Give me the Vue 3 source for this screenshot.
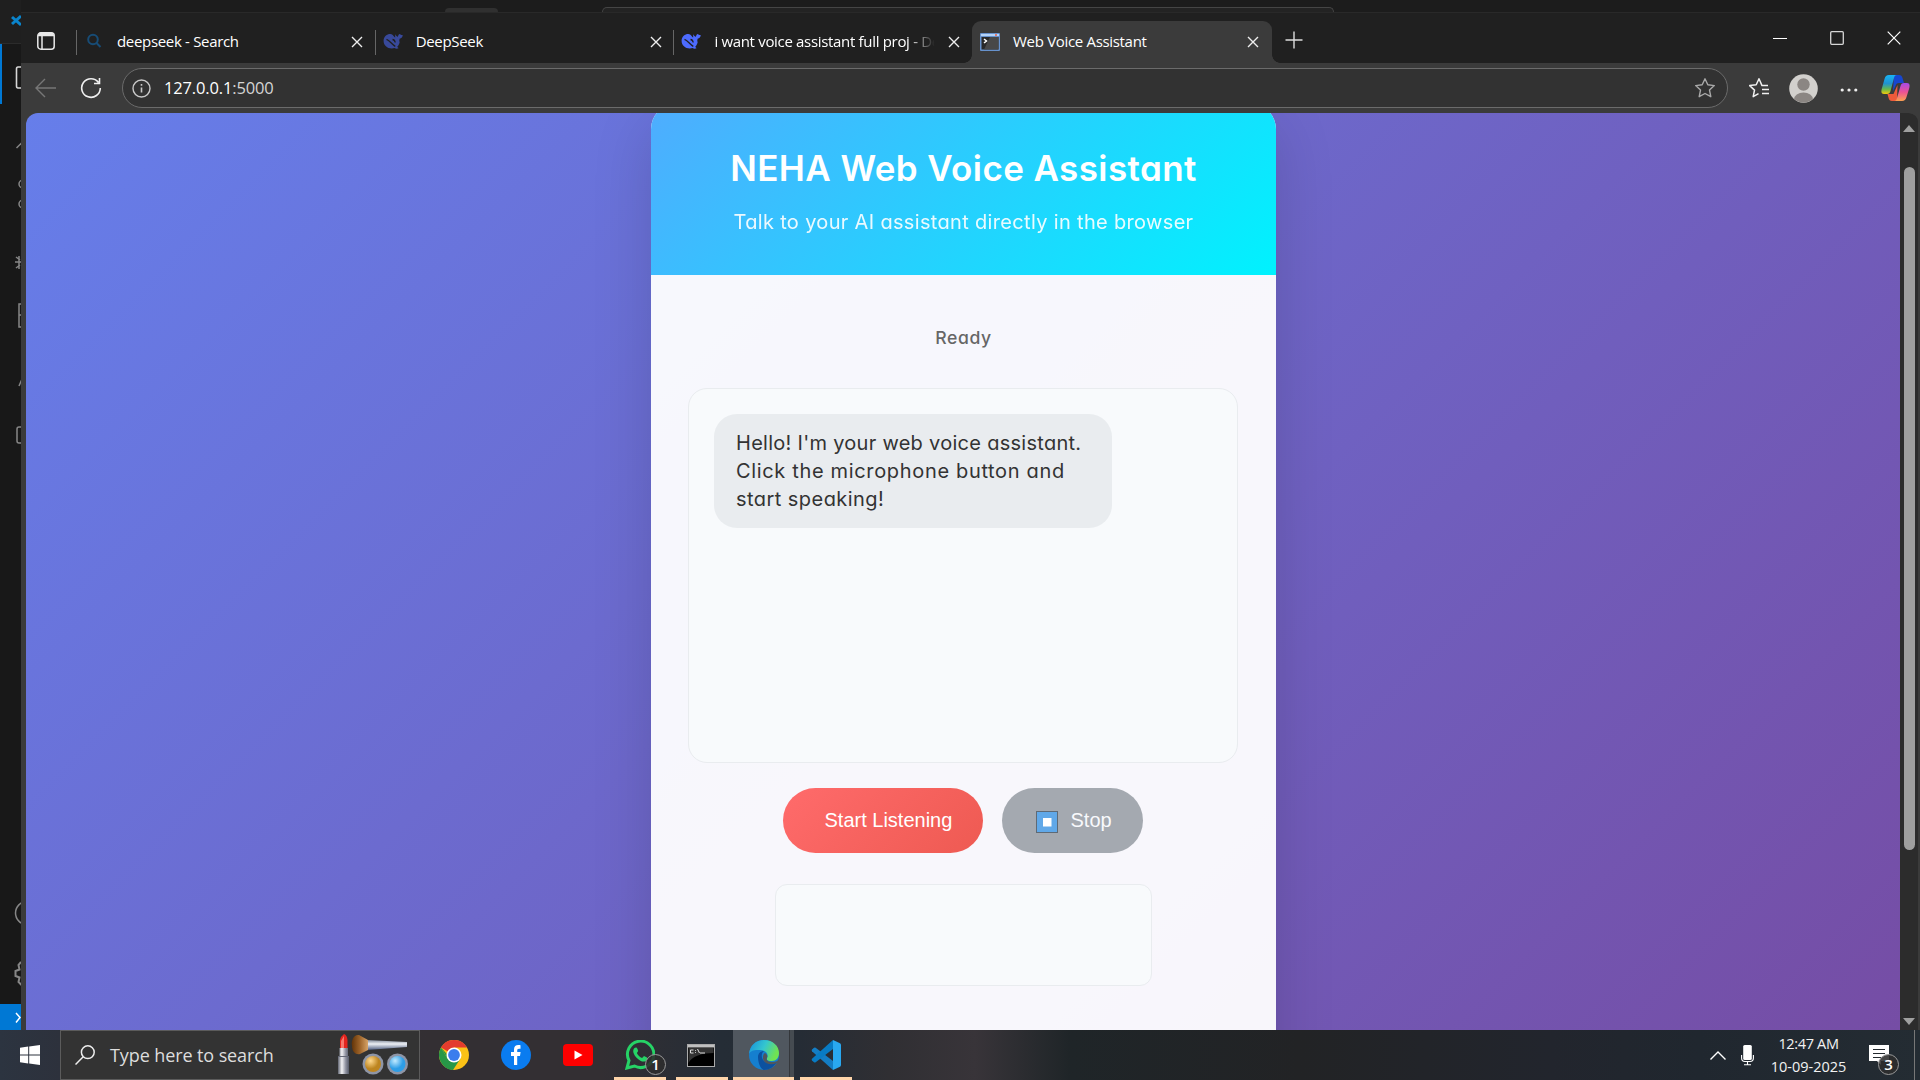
<script setup>
const tabs = [
  { title: 'deepseek - Search', icon: 'search' },
  { title: 'DeepSeek', icon: 'whale', dim: true },
  { title: 'i want voice assistant full proj - De', icon: 'whale', fade: true },
]
const whaleBody = 'M.6 9.800C.6 5.500 4 3 7.200 3c2 0 2.600 1.300 4.200 3 2.200 2 4.800 3.200 5.300 5-.4 2-1.300 3.700-2.600 5 .8.300 1.200.7 1.400 1.300-1.500.6-2.800.4-4-.2C6 18.600.6 15.500.6 9.800z'
const whaleTail = 'M12.300 3.300c.7 1.800 1.500 2.300 2.600 2.500.3-1.600 1-2.400 2-2.700.8 1 1.600 1.100 2.800.8-.1 2-1.200 3.500-3.100 3.800-.2 1.800-.5 3.400-1.200 4.500L12 8.500z'
</script>

<template>
  <div class="screen">
    <div class="desktop">
      <aside class="editor">
        <svg width="21" height="1030" viewBox="0 0 21 1030" fill="none">
          <path d="M0 0H21V43H0z" fill="#1f1f1f" /><path d="M0 43.500H21" stroke="#2b2b2b" />
          <path d="M12 17l9 8M12 24l9-8" stroke="#0a84cc" stroke-width="3" />
          <path d="M0 44H2V104H0z" fill="#0078d4" />
          <path d="M24 67h-6q-1.500 0-1.500 2v17q0 2 1.500 2h6" stroke="#d7d7d7" stroke-width="1.600" />
          <g stroke="#868686" stroke-width="1.500">
            <path d="M16.500 148l5-5" />
            <circle cx="23" cy="184" r="4" /><circle cx="23" cy="204" r="4" />
            <path d="M16 257l4 3M15 262h6M16 268l4-3M19 256v13" />
            <path d="M24 304h-5v23h5M19 315h4" />
            <path d="M19 386l3-7M24 427h-5q-2 0-2 2v12q0 2 2 2h5" />
            <circle cx="27" cy="913" r="11.500" />
            <path d="M21 962l-2.500 3 1 4.500-4 1.500v5l4 1.500-1 4.500 3 3" stroke-width="2" />
          </g>
          <path d="M0 1004H21V1030H0z" fill="#0078d4" /><path d="M16 1013l4 4.500-4 5" stroke="#fff" stroke-width="1.500" />
        </svg>
      </aside>

      <div class="main">
        <div class="behind"><i class="chip"></i><i class="command"></i></div>
        <div class="browser">
          <div class="tabbar">
            <svg class="workspace" width="20" height="20" viewBox="0 0 20 20" fill="none" stroke="#e8e8e8" stroke-width="1.500"><rect x="1.800" y="1.800" width="16.400" height="16.400" rx="3" /><path d="M2 4.500h16M6 5v13" /><path d="M3 3.300h14" stroke-width="3" /></svg>
            <div v-for="t in tabs" :key="t.title" class="tab">
              <svg v-if="t.icon === 'search'" class="fav" width="20" height="20" viewBox="0 0 20 20" fill="none" stroke="#174c76" stroke-width="2"><circle cx="9" cy="8.500" r="4.800" /><path d="M12.500 12l4 4" /></svg>
              <svg v-else class="fav" :class="{ dim: t.dim }" width="20" height="20" viewBox="0 0 20 20"><path :d="whaleBody" fill="#4d6bfe" /><path :d="whaleTail" fill="#4d6bfe" /><path d="M3.500 8.300c3.300 1.200 5.300 5.200 8.800 7M9.500 8.500c1.500.2 2.500 1.500 2.700 3" fill="none" stroke="#202020" stroke-width="1.300" /></svg>
              <span class="title" :class="{ fade: t.fade }">{{ t.title }}</span>
              <svg class="close" width="12" height="12" viewBox="0 0 12 12"><path d="M1 1l10 10M11 1L1 11" stroke="#eee" stroke-width="1.400" /></svg>
            </div>
            <div class="tab active">
              <svg class="fav" width="20" height="18" viewBox="0 0 20 18"><rect width="20" height="18" rx="1" fill="#6792cd" /><path d="M1 1h18v2H1z" fill="#b5d3f7" /><path d="M15 1h2v2h-2z" fill="#df7d72" /><path d="M1.500 4h17v12.500h-17z" fill="#292929" /><path d="M10 4h8.500v12.500H4z" fill="#484848" /><path d="M4 6l2.500 2L4 10" fill="none" stroke="#fff" stroke-width="1.500" /></svg>
              <span class="title">Web Voice Assistant</span>
              <svg class="close" width="12" height="12" viewBox="0 0 12 12"><path d="M1 1l10 10M11 1L1 11" stroke="#eee" stroke-width="1.400" /></svg>
            </div>
            <svg class="plus" width="18" height="18" viewBox="0 0 18 18"><path d="M9 .5v17M.5 9h17" stroke="#ddd" stroke-width="1.400" /></svg>
            <div class="controls">
              <svg width="14" height="14" viewBox="0 0 14 14"><path d="M0 7.500h14" stroke="#fff" /></svg>
              <svg width="14" height="14" viewBox="0 0 14 14"><rect x=".7" y=".7" width="12.600" height="12.600" rx="1" fill="none" stroke="#d6d6d6" stroke-width="1.300" /></svg>
              <svg width="14" height="14" viewBox="0 0 14 14"><path d="M.7.7l12.600 12.600M13.300.7L.7 13.300" stroke="#fff" stroke-width="1.200" /></svg>
            </div>
          </div>

          <div class="toolbar">
            <svg class="back" width="22" height="20" viewBox="0 0 22 20" fill="none" stroke="#777" stroke-width="1.400"><path d="M21 10H1.500M10 1L1 10l9 9" /></svg>
            <svg class="reload" width="22" height="22" viewBox="0 0 22 22" fill="none" stroke="#f0f0f0" stroke-width="1.600"><path d="M18.500 5.500A9.300 9.300 0 1 0 20.300 11M19.500 1v5.500H14" /></svg>
            <div class="address">
              <svg width="19" height="19" viewBox="0 0 19 19" fill="none" stroke="#c9c9c9" stroke-width="1.400"><circle cx="9.500" cy="9.500" r="8.500" /><path d="M9.500 8.500v5M9.500 5v1.700" stroke-width="1.600" /></svg>
              <span>127.0.0.1<em>:5000</em></span>
              <svg class="star" width="22" height="22" viewBox="0 0 22 22" fill="none" stroke="#a9a9a9" stroke-width="1.400" stroke-linejoin="round"><path d="M11 1.800l2.800 6 6.500.8-4.800 4.500 1.300 6.600L11 16.500l-5.800 3.200 1.300-6.600L1.700 8.600l6.500-.8z" /></svg>
            </div>
            <svg class="favs" width="22" height="22" viewBox="0 0 22 22" fill="none" stroke="#f0f0f0" stroke-width="1.500" stroke-linejoin="round"><path d="M20 8.600h-6L11 1.800l-2.800 6-6.500.8 4.800 4.500-1.300 6.600 5.300-3M14 12.500h7M14 16.500h7" /></svg>
            <svg class="avatar" width="29" height="29" viewBox="0 0 29 29"><defs><clipPath id="face"><circle cx="14.500" cy="14.500" r="14" /></clipPath></defs><circle cx="14.500" cy="14.500" r="14.300" fill="#d2d0cd" /><g fill="#8b8683" clip-path="url(#face)"><circle cx="14.500" cy="10.500" r="6.200" /><ellipse cx="14.500" cy="25.500" rx="9.500" ry="7" /></g></svg>
            <svg class="dots" width="18" height="6" viewBox="0 0 18 6" fill="#eee"><circle cx="2.200" cy="3" r="1.600" /><circle cx="9" cy="3" r="1.600" /><circle cx="15.800" cy="3" r="1.600" /></svg>
            <svg class="copilot" width="29" height="28" viewBox="0 0 29 28">
              <defs>
                <linearGradient id="cpa" x1="0" y1="0" x2="0" y2="1"><stop stop-color="#18b4f4" /><stop offset=".45" stop-color="#2092d0" /><stop offset=".75" stop-color="#67b84b" /><stop offset="1" stop-color="#f5c90b" /></linearGradient>
                <linearGradient id="cpb" x1="0" y1="0" x2="0" y2="1"><stop stop-color="#a44bea" /><stop offset=".5" stop-color="#ed5195" /><stop offset="1" stop-color="#fba150" /></linearGradient>
              </defs>
              <path d="M13 1h5c2 0 3 1 3.500 3l1.500 5h-5c-2 0-3 1-3.500 3L12 17z" fill="#1746cf" />
              <path d="M16 27h-5c-2 0-3-1-3.400-3L6.500 20h6l4-9z" fill="#ef5a3b" />
              <path d="M8 1h8c-2 0-2.500 1-3 3l-3.500 13c-.5 2-1.500 3-3.500 3H3c-3 0-3-3-2-6L3.500 5C4.200 2.500 5.500 1 8 1z" fill="url(#cpa)" />
              <path d="M21 27h-8c2 0 2.500-1 3-3l3.500-12c.5-2 1.500-3 3.500-3h3c3 0 3 3 2 6l-2.500 8c-.7 2.500-2 4-4.500 4z" fill="url(#cpb)" />
            </svg>
          </div>

          <div class="viewport">
            <div class="page">
              <main class="card">
                <header><h1>NEHA Web Voice Assistant</h1><p>Talk to your AI assistant directly in the browser</p></header>
                <div class="status">Ready</div>
                <section class="chat">
                  <div class="bubble">
                    <div class="l1">Hello! I'm your web voice assistant.</div>
                    <div class="l2">Click the microphone button and</div>
                    <div class="l3">start speaking!</div>
                  </div>
                </section>
                <div class="actions">
                  <button class="start">Start Listening</button>
                  <button class="stop"><svg width="22" height="22" viewBox="0 0 22 22"><rect x=".5" y=".5" width="21" height="21" fill="#60a8e8" stroke="#5e6a76" /><rect x="7" y="7" width="8.500" height="8.500" fill="#fff" /></svg><span>Stop</span></button>
                </div>
                <div class="transcript"></div>
              </main>
            </div>
            <div class="scroll"><i class="up"></i><i class="thumb"></i><i class="down"></i></div>
          </div>
        </div>
      </div>
    </div>

    <footer class="taskbar">
      <div class="win"><svg width="20" height="20" viewBox="0 0 20 20" fill="#fff"><path d="M0 2.800L8.200 1.600v7.900H0zM9.200 1.500L20 0v9.500H9.200zM0 10.500h8.200v7.900L0 17.200zM9.200 10.500H20V20L9.200 18.500z" /></svg></div>
      <div class="search">
        <svg width="20" height="20" viewBox="0 0 20 20" fill="none" stroke="#eee" stroke-width="1.500"><circle cx="12.800" cy="7.200" r="6.400" /><path d="M8.200 11.800L.5 19.500" /></svg>
        <span>Type here to search</span>
        <svg class="makeup" width="72" height="44" viewBox="0 0 72 44">
          <defs>
            <linearGradient id="metal"><stop stop-color="#5f6370" /><stop offset=".35" stop-color="#f4f4f6" /><stop offset=".7" stop-color="#8f92a0" /><stop offset="1" stop-color="#555a68" /></linearGradient>
            <linearGradient id="handle" x1="0" y1="0" x2="0" y2="1"><stop stop-color="#828b9c" /><stop offset=".4" stop-color="#edf0f4" /><stop offset="1" stop-color="#4d5c80" /></linearGradient>
            <linearGradient id="hair"><stop stop-color="#633408" /><stop offset=".5" stop-color="#9d642a" /><stop offset="1" stop-color="#d6a367" /></linearGradient>
            <radialGradient id="gold" cx=".35" cy=".3"><stop stop-color="#ffd88c" /><stop offset="1" stop-color="#bd8520" /></radialGradient>
            <radialGradient id="sky" cx=".35" cy=".3"><stop stop-color="#c1eaff" /><stop offset="1" stop-color="#2d9de6" /></radialGradient>
          </defs>
          <path d="M3 16V7q1-4 4-6 3 1 3.500 6v9z" fill="#e4251f" /><path d="M4 15V8l3-5v12z" fill="#f8766a" />
          <path d="M2.500 15h8.500v9H2.500zM1 23h11v18H1z" fill="url(#metal)" /><path d="M1 23.500h11" stroke="#656978" />
          <path d="M30 7l40 2v5l-40 3z" fill="url(#handle)" /><path d="M31 7L22 2c-5-1-8 5-7 11 0 6 4 9 8 8l8-4z" fill="url(#hair)" />
          <circle cx="36" cy="31" r="10.500" fill="#8e95a6" /><circle cx="36" cy="31" r="8" fill="url(#gold)" />
          <circle cx="60.500" cy="31" r="10.500" fill="#8e95a6" /><circle cx="60.500" cy="31" r="8" fill="url(#sky)" />
        </svg>
      </div>
      <nav class="apps">
        <div class="app"><svg width="30" height="30" viewBox="0 0 30 30"><circle cx="15" cy="15" r="15" fill="#fbc116" /><path d="M15 15L2 7.500A15 15 0 0 1 28 7.500H15z" fill="#e33b2e" /><path d="M2 7.500A15 15 0 0 0 14 30l7.500-11.500L15 15 8.500 18.700z" fill="#279847" /><path d="M2 7.500l6.500 11.200L15 22z" fill="#279847" /><circle cx="15" cy="15" r="7.500" fill="#fff" /><circle cx="15" cy="15" r="5.900" fill="#3b7ded" /></svg></div>
        <div class="app"><svg width="30" height="30" viewBox="0 0 30 30"><circle cx="15" cy="15" r="15" fill="#0a7cf0" /><path d="M13 25v-9h-3v-4h3v-2.500C13 6.300 14.800 5 17.300 5c1.200 0 2.200.2 2.200.2v3.500H18c-1.400 0-1.800.7-1.800 1.800V12h3.400l-.6 4h-2.800v9z" fill="#fff" /></svg></div>
        <div class="app"><svg width="30" height="22" viewBox="0 0 30 22"><rect width="30" height="22" rx="4" fill="#f00" /><path d="M11.500 6.500l8 4.500-8 4.500z" fill="#fff" /></svg></div>
        <div class="app open wa"><svg width="30" height="30" viewBox="0 0 30 30"><path d="M2 28l2-7.500A13.200 13.200 0 1 1 9.500 26z" fill="none" stroke="#26d366" stroke-width="3" /><path d="M9.500 8c1.500-1.200 2.500-.5 3 1l.7 2-1.300 2c1.100 2.400 2.800 4 5.200 5l1.900-1.900 3 1.400c.7.800.1 3-1.500 3.700-2.500 1.100-5.500-.3-8.700-3.300-3-3-5-7.400-2.300-9.900z" fill="#26d366" /></svg><b class="badge">1</b></div>
        <div class="app open cmd"><svg width="28" height="23" viewBox="0 0 28 23"><rect x=".5" y=".5" width="27" height="22" fill="#000" stroke="#aaa" /><path d="M1 1h26v2.500H1z" fill="#c0c0c0" /><path d="M1.500 4h25v5C15 9 5 12 1.500 19z" fill="#333" /><path d="M6.500 6h-3v3h3M8.500 6v.8M8.500 8.200V9M10.500 5l2 4M13 9h5" fill="none" stroke="#ddd" /></svg></div>
        <div class="app open current"><svg width="30" height="30" viewBox="0 0 30 30"><defs><linearGradient id="eg" x1="0" y1="0" x2="1" y2=".35"><stop stop-color="#168edc" /><stop offset=".55" stop-color="#34c6cf" /><stop offset="1" stop-color="#70e352" /></linearGradient></defs><circle cx="15" cy="15" r="15" fill="#157fcf" /><path d="M0 14C1 5 7 0 15 0c9 0 15 6 15 13 0 5-3 8-7 8-4 0-6-1-5-3 2-4-1-8-7-8C5 9.500 1 11 0 14z" fill="url(#eg)" /><path d="M9 17c0-4 3-6 6-6-3 2-3 7 0 10 3 3 8 3 13 1-3 5-8 8-13 8-4-1-6-8-6-13z" fill="#0c519f" /><path d="M18 18c-1 3 2 4 6 4 3 0 5-1 6-3v3l-2 1c-5 2-10 2-13-2-2-3-1-7 1-8 2 1 3 3 2 5z" fill="#50565d" /></svg></div>
        <div class="app open code"><svg width="30" height="30" viewBox="0 0 30 30"><path d="M1 9.500l2-1.800q.8-.6 1.700 0L22 21v9L1 11.200q-.7-.8 0-1.700z" fill="#147dc4" /><path d="M1 20.500l2 1.800q.8.600 1.700 0L22 9V0L1 18.800q-.7.800 0 1.700z" fill="#087bc4" /><path d="M22 0l6.500 3Q30 3.700 30 5v20q0 1.300-1.500 2L22 30z" fill="#29a8f0" /></svg></div>
      </nav>
      <div class="tray">
        <svg class="chev" width="16" height="9" viewBox="0 0 16 9"><path d="M.5 8.500L8 1l7.500 7.500" fill="none" stroke="#fff" stroke-width="1.400" /></svg>
        <svg class="mic" width="13" height="21" viewBox="0 0 13 21"><rect x="2.200" y="0" width="8.600" height="15" rx="1.500" fill="#fff" /><path d="M.6 10v3q0 3.500 3.400 3.500h5q3.400 0 3.400-3.500v-3M6.500 16.500v3M3 19.800h7" fill="none" stroke="#fff" stroke-width="1.100" /></svg>
        <div class="clock"><span>12:47 AM</span><span class="date">10-09-2025</span></div>
        <div class="note"><svg width="20" height="20" viewBox="0 0 20 20"><path d="M0 0h20v16h-8v4l-4-4H0z" fill="#fff" /><path d="M4 4.500h12M4 8.500h12M4 12.500h8" stroke="#23292e" /></svg><b class="badge">3</b></div>
      </div>
    </footer>
  </div>
</template>

<style>
body { margin: 0; overflow: hidden; background: #181818; }
</style>
<style scoped>
* { box-sizing: border-box; }
svg { display: block; flex: none; }
.screen { width: 1920px; height: 1080px; display: flex; flex-direction: column; overflow: hidden; font-family: "Open Sans", "Noto Sans", sans-serif; color: #fff; }
.desktop { height: 1030px; display: flex; }
.editor { width: 21px; background: #181818; flex: none; }
.main { flex: 1; min-width: 0; display: flex; flex-direction: column; }
.behind { height: 12px; background: #1c1c1c; display: flex; align-items: flex-end; overflow: hidden; }
.chip { width: 53px; height: 4px; margin-left: 424px; background: #303030; border-radius: 5px 5px 0 0; }
.command { width: 732px; height: 5px; margin-left: 104px; border: 1px solid #454545; border-bottom: 0; border-radius: 7px 7px 0 0; background: #232323; }
.browser { height: 1018px; display: flex; flex-direction: column; background: #3b3b3b; }
.tabbar { height: 51px; background: #202020; display: flex; border-top: 1px solid #292929; flex: none; font-size: 15px; }
.workspace { margin: 18px 20px 0 15px; }
.tab { width: 298.700px; height: 42px; margin-top: 8px; display: flex; align-items: center; position: relative; padding-bottom: 2px; }
.tab:not(.active)::before { content: ""; width: 1px; height: 25px; background: #666; margin-top: 2px; }
.fav { margin: 0 12px 0 7px; }
.dim { opacity: .55; }
.title { width: 224px; flex: none; overflow: hidden; white-space: nowrap; line-height: 24px; letter-spacing: -.32px; padding-left: 1px; }
.title.fade { -webkit-mask-image: linear-gradient(90deg, #000 87%, transparent 99%); mask-image: linear-gradient(90deg, #000 87%, transparent 99%); }
.close { margin: 2px 0 0 11px; }
.tab.active { width: 300px; background: #3b3b3b; border-radius: 9px 9px 0 0; }
.tab.active .fav { margin-left: 8px; margin-top: 2px; }
.tab.active::before, .tab.active::after { content: ""; position: absolute; bottom: 0; width: 8px; height: 8px; }
.tab.active::before { left: -8px; background: radial-gradient(circle at 0 0, transparent 7.500px, #3b3b3b 8px); }
.tab.active::after { right: -8px; background: radial-gradient(circle at 100% 0, transparent 7.500px, #3b3b3b 8px); }
.plus { margin: 18px 0 0 13px; }
.controls { margin: 18px 19px 0 auto; display: flex; gap: 43px; }
.toolbar { height: 50px; display: flex; align-items: center; flex: none; }
.back { margin-left: 14px; }
.reload { margin-left: 23px; }
.address { width: 1606px; height: 40px; margin-left: 20px; border: 1px solid #6b6b6b; border-radius: 20px; background: #323232; display: flex; align-items: center; padding: 0 11px 0 9px; font-size: 16.500px; }
.address span { margin: 0 0 2px 13px; letter-spacing: -.15px; }
.address em { font-style: normal; color: #d5d5d5; }
.star { margin-left: auto; }
.favs { margin-left: 20px; }
.avatar { margin-left: 19px; }
.dots { margin-left: 22px; margin-top: 3px; }
.copilot { margin-left: 23px; }
.viewport { height: 917px; margin-left: 5px; display: flex; border-radius: 12px 12px 0 0; overflow: hidden; }
.page { width: 1874px; height: 917px; overflow: hidden; background: linear-gradient(135deg, #667eea, #764ba2 104%); }
.scroll { width: 18px; margin-right: 2px; background: #2c2c2c; border-radius: 0 9px 0 0; display: flex; flex-direction: column; align-items: center; flex: none; }
.up, .down { border: 6.500px solid transparent; }
.up { border-top: 0; border-bottom: 7px solid #a0a0a0; margin-top: 12px; }
.thumb { width: 11px; height: 683px; border-radius: 6px; background: #9f9f9f; margin-top: 35px; }
.down { border-bottom: 0; border-top: 7px solid #a0a0a0; margin-top: auto; margin-bottom: 5px; }
.card { width: 625px; height: 1000px; margin: -9px 0 0 625px; border-radius: 25px; overflow: hidden; background: rgba(255,255,255,.95); box-shadow: 0 20px 60px rgba(0,0,0,.15); display: flex; flex-direction: column; align-items: center; font-family: Inter, "Open Sans", sans-serif; font-feature-settings: "cv11"; }
header { width: 625px; height: 171px; padding-top: 38px; background: linear-gradient(135deg, #4facfe, #00f2fe); text-align: center; flex: none; }
h1 { margin: 0; font-size: 35px; line-height: 52px; font-weight: 600; letter-spacing: .4px; white-space: nowrap; }
p { margin: 13px 0 0; font-size: 20px; line-height: 30px; letter-spacing: .33px; opacity: .9; white-space: nowrap; }
.status { margin-top: 48px; height: 30px; line-height: 30px; font-size: 17.600px; font-weight: 500; color: #666; letter-spacing: .6px; }
.chat { width: 550px; height: 375px; margin: 35px 1px 0 0; padding: 25px; border: 1px solid #e9ecef; border-radius: 19px; background: #f8fafc; flex: none; }
.bubble { width: 398px; height: 114px; padding: 15px 22px; border-radius: 23px; background: #e9ecef; color: #333; font-size: 20px; line-height: 28px; white-space: nowrap; }
.l1 { letter-spacing: .28px; }
.l2 { letter-spacing: .66px; }
.l3 { letter-spacing: .45px; }
.actions { display: flex; gap: 19px; margin: 25px 2px 0 0; }
button { border: 0; height: 65px; border-radius: 33px; padding: 0; font: 20px "Liberation Sans", sans-serif; color: #fff; display: flex; align-items: center; }
.start { width: 200px; padding-left: 42px; background: linear-gradient(135deg, #ff6b6b, #ee5a52); letter-spacing: 0; }
.stop { width: 141px; padding-left: 34px; gap: 13px; background: #a4a9b0; color: #f8f9fc; }
.stop svg { margin-top: 3px; }
.transcript { width: 377px; height: 102px; margin-top: 31px; border: 1px solid #e9ecef; border-radius: 12px; background: #f8fafc; flex: none; }
.taskbar { height: 50px; display: flex; background: linear-gradient(90deg, #2c3440 0, #2d313c 60px, #332f33 430px, #332f33 600px, #252d36 720px, #252c35 800px, #302f33 890px, #383439 975px, #1f2528 1070px, #222325 1300px, #22252d 1550px, #20272f 1700px, #242c33 1920px); }
.win { width: 60px; padding: 15px 20px; }
.search { width: 360px; height: 50px; border: 1px solid #5b5b5b; background: #333; display: flex; align-items: center; padding-left: 14px; font-size: 18px; color: #ddd; flex: none; }
.search span { width: 227px; margin-left: 15px; white-space: nowrap; letter-spacing: -.1px; }
.apps { display: flex; padding-left: 8px; }
.app { width: 52px; height: 50px; margin-right: 10px; display: flex; align-items: center; justify-content: center; position: relative; }
.open { border-bottom: 3px solid #ffd5aa; padding-top: 3px; }
.wa { margin-left: 0; }
.cmd { margin-right: 5px; padding-right: 2px; }
.current { width: 61px; margin-right: 6px; background: linear-gradient(90deg, #50575f 56px, #34373b 56px, #34373b 57px, #454b51 57px); }
.badge { position: absolute; width: 21px; height: 21px; border: 1px solid #999; border-radius: 50%; background: rgba(45,45,45,.88); text-align: center; font-size: 15px; line-height: 19px; font-weight: 600; }
.wa .badge { left: 31px; top: 24px; }
.tray { margin-left: auto; display: flex; align-items: center; padding-right: 5px; }
.chev { margin-right: 15px; }
.clock { width: 85px; margin-left: 12px; display: flex; flex-direction: column; text-align: center; font-size: 14.500px; line-height: 23px; letter-spacing: -.35px; color: #f2f2f2; }
.date { letter-spacing: 0; }
.note { position: relative; width: 46px; margin-left: 18px; border-right: 1px solid #777; height: 50px; padding-top: 15px; }
.note .badge { left: 9px; top: 24px; }
</style>
